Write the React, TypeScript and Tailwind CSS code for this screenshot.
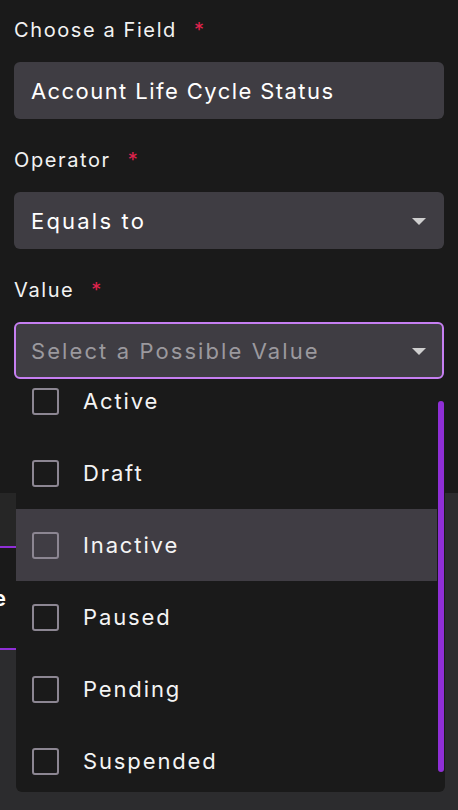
import { useState } from 'react'

const options = ['Active', 'Draft', 'Inactive', 'Paused', 'Pending', 'Suspended']

function Label({ text }: { text: string }) {
  return (
    <div className="flex items-center h-[30px] text-[20px] tracking-[0.08em] text-[#f2f2f2]">
      <span>{text}</span>
      <span className="ml-[17px] text-[#e0234e]">*</span>
    </div>
  )
}

function Caret() {
  return (
    <svg width="14" height="7" viewBox="0 0 14 7" className="shrink-0">
      <path d="M0 0h14L7 7z" fill="#cfcfcf" />
    </svg>
  )
}

export default function App() {
  const [hovered] = useState('Inactive')

  return (
    <div
      className="relative w-[458px] h-[810px] overflow-hidden bg-[#1a1a1a]"
      style={{ fontFamily: 'Inter, "Open Sans", sans-serif' }}
    >
      {/* Form */}
      <div className="h-[493px] px-[14px] pt-[15px]">
        <Label text="Choose a Field" />
        <div className="mt-[17px] h-[57px] rounded-md bg-[#3f3d43] flex items-center px-[17px] pt-px text-[22px] tracking-[0.065em] text-white">
          Account Life Cycle Status
        </div>

        <div className="mt-[26px]">
          <Label text="Operator" />
        </div>
        <div className="mt-[17px] h-[57px] rounded-md bg-[#3f3d43] flex items-center justify-between pl-[17px] pr-[18px] pt-px text-[22px] tracking-[0.1em] text-white">
          <span>Equals to</span>
          <Caret />
        </div>

        <div className="mt-[26px]">
          <Label text="Value" />
        </div>
        <div className="mt-[17px] h-[57px] rounded-md bg-[#3f3d43] border-2 border-[#c67ff2] flex items-center justify-between pl-[15px] pr-[16px] pt-px text-[22px] tracking-[0.095em] text-[#9b999e]">
          <span>Select a Possible Value</span>
          <Caret />
        </div>
      </div>

      {/* Underlying panel */}
      <div className="flex h-[317px] bg-[#2c2c2e]">
        <div className="w-4 flex flex-col">
          <div className="h-[55px] bg-[#262626] border-b-2 border-[#8f2fd6]" />
          <div className="h-[102px] bg-[#1a1a1a] border-b-2 border-[#8f2fd6] flex items-center justify-end pr-[10px] overflow-hidden whitespace-nowrap text-[22px] font-semibold text-white">
            Value
          </div>
        </div>
      </div>

      {/* Dropdown */}
      <div className="absolute left-4 top-[380px] w-[429px] h-[412px] rounded-b-md bg-[#1a1a1a] overflow-hidden flex">
        <div className="w-[421px] -mt-[15px]">
          {options.map((opt) => (
            <div
              key={opt}
              className={`h-[72px] flex items-center pl-4 ${opt === hovered ? 'bg-[#403d44]' : ''}`}
            >
              <div className="w-[27px] h-[27px] rounded-[3px] border-2 border-[#8c8692]" />
              <span className="ml-[24px] pt-px text-[22px] tracking-[0.085em] text-[#f4f4f4]">{opt}</span>
            </div>
          ))}
        </div>
        <div className="w-2 pt-[21px] pl-px">
          <div className="w-[6px] h-[371px] rounded-full bg-[#8f2fd6]" />
        </div>
      </div>
    </div>
  )
}
